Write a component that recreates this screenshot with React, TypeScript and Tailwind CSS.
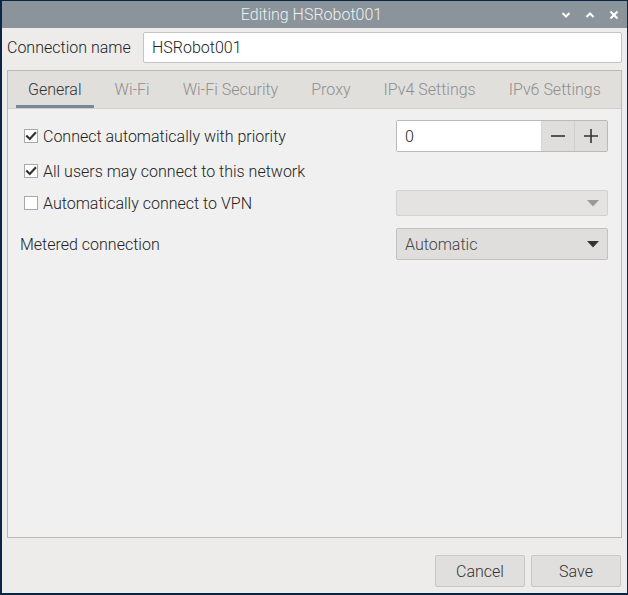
import React from "react";

const font = { fontFamily: "Roboto, 'Liberation Sans', sans-serif" };

function Check({ checked }: { checked: boolean }) {
  return (
    <span className="ml-[4px] mr-[5px] flex h-[14px] w-[14px] items-center justify-center border border-[#a9a9a9] bg-white">
      {checked && (
        <svg width="12" height="12" viewBox="0 0 12 12">
          <path d="M2 6.2 L4.8 9 L10.2 3" stroke="#333" strokeWidth="2.2" fill="none" strokeLinecap="square" />
        </svg>
      )}
    </span>
  );
}

function Arrow({ color }: { color: string }) {
  return (
    <svg width="12" height="7" viewBox="0 0 12 7">
      <path d="M0 0 H12 L6 6.5 Z" fill={color} />
    </svg>
  );
}

const tabs = ["General", "Wi-Fi", "Wi-Fi Security", "Proxy", "IPv4 Settings", "IPv6 Settings"];

export default function App() {
  return (
    <div className="relative h-[595px] w-[628px] overflow-hidden bg-[#0a2644]" style={font}>
      <div className="ml-[2px] mt-[1px] flex h-[592px] w-[625px] flex-col bg-[#edeceb] text-[16px] font-light text-[#222]">
        {/* Title bar */}
        <div className="relative flex h-[27px] items-center justify-center bg-[#8a949a] text-[16px] font-light text-[#eef0f2]">
          <span className="-ml-[6px]">Editing HSRobot001</span>
          <div className="absolute right-[8px] top-0 flex h-[27px] items-center gap-[14px]">
            <svg width="10" height="8" viewBox="0 0 10 8">
              <path d="M1.5 2 L5 5.5 L8.5 2" stroke="#fff" strokeWidth="2" fill="none" />
            </svg>
            <svg width="10" height="8" viewBox="0 0 10 8">
              <path d="M1.5 6 L5 2.5 L8.5 6" stroke="#fff" strokeWidth="2" fill="none" />
            </svg>
            <svg width="10" height="10" viewBox="0 0 10 10">
              <path d="M1.5 1.5 L8.5 8.5 M8.5 1.5 L1.5 8.5" stroke="#fff" strokeWidth="2.2" fill="none" />
            </svg>
          </div>
        </div>

        <div className="flex flex-1 flex-col px-[5px] pt-[4px]">
          {/* Connection name */}
          <div className="flex h-[31px] items-center">
            <span className="w-[136px] shrink-0 pt-[1px]">Connection name</span>
            <div className="flex h-[31px] flex-1 items-center rounded-[2px] border border-[#c4c4c4] bg-white pl-[8px] pt-[1px]">
              HSRobot001
            </div>
          </div>

          {/* Notebook */}
          <div className="mt-[7px] flex h-[468px] flex-col border border-[#b9b9b7]">
            <div className="flex h-[38px] shrink-0 gap-[9px] whitespace-nowrap border-b border-[#cfcfcd] bg-[#e1dfdc] px-[8px]">
              {tabs.map((t, i) => (
                <div
                  key={t}
                  className={
                    i === 0
                      ? "flex items-center whitespace-nowrap border-b-[3px] border-[#7b8893] px-[12px] pt-[3px] text-[#333]"
                      : "flex items-center whitespace-nowrap border-b-[3px] border-transparent px-[12px] pt-[3px] text-[#8e8e8e]"
                  }
                >
                  {t}
                </div>
              ))}
            </div>
            <div className="flex-1 bg-[#f0f0f0] pl-[12px] pr-[13px] pt-[11px]">
              <div className="flex h-[32px] items-center">
                <div className="flex flex-1 items-center">
                  <Check checked />
                  <span className="pt-[2px]">Connect automatically with priority</span>
                </div>
                <div className="flex h-[32px] w-[212px] rounded-[2px] border border-[#b9b9b9]">
                  <div className="flex flex-1 items-center bg-white pl-[8px] pt-[1px]">0</div>
                  <div className="flex w-[33px] items-center justify-center border-l border-[#d4d4d4] bg-[#dfdedc]">
                    <svg width="16" height="16" viewBox="0 0 16 16">
                      <path d="M1 8 H15" stroke="#333" strokeWidth="1.6" />
                    </svg>
                  </div>
                  <div className="flex w-[33px] items-center justify-center border-l border-[#cfcfcf] bg-[#dfdedc]">
                    <svg width="16" height="16" viewBox="0 0 16 16">
                      <path d="M1 8 H15 M8 1 V15" stroke="#333" strokeWidth="1.6" />
                    </svg>
                  </div>
                </div>
              </div>

              <div className="mt-[4px] flex h-[30px] items-center">
                <Check checked />
                <span className="pt-[2px]">All users may connect to this network</span>
              </div>

              <div className="mt-[4px] flex h-[26px] items-center">
                <div className="flex flex-1 items-center">
                  <Check checked={false} />
                  <span className="pt-[2px]">Automatically connect to VPN</span>
                </div>
                <div className="flex h-[26px] w-[212px] items-center justify-end rounded-[2px] border border-[#d2d2d0] bg-[#e4e3e1] pr-[8px]">
                  <Arrow color="#9a9a9a" />
                </div>
              </div>

              <div className="mt-[12px] flex h-[32px] items-center">
                <span className="flex-1 pt-[2px]">Metered connection</span>
                <div className="flex h-[32px] w-[212px] items-center justify-between rounded-[2px] border border-[#c2c2c0] bg-[#dfdedc] pl-[8px] pr-[8px] text-[#444]">
                  <span className="pt-[1px]">Automatic</span>
                  <Arrow color="#333" />
                </div>
              </div>
            </div>
          </div>

          {/* Buttons */}
          <div className="mt-[17px] flex justify-end gap-[6px] pr-[1px]">
            <button className="h-[32px] w-[90px] rounded-[2px] border border-[#c8c8c6] bg-[#e0dfdd] pt-[1px] text-[16px] font-light text-[#333]">
              Cancel
            </button>
            <button className="h-[32px] w-[90px] rounded-[2px] border border-[#c8c8c6] bg-[#e0dfdd] pt-[1px] text-[16px] font-light text-[#333]">
              Save
            </button>
          </div>
        </div>
      </div>
    </div>
  );
}
